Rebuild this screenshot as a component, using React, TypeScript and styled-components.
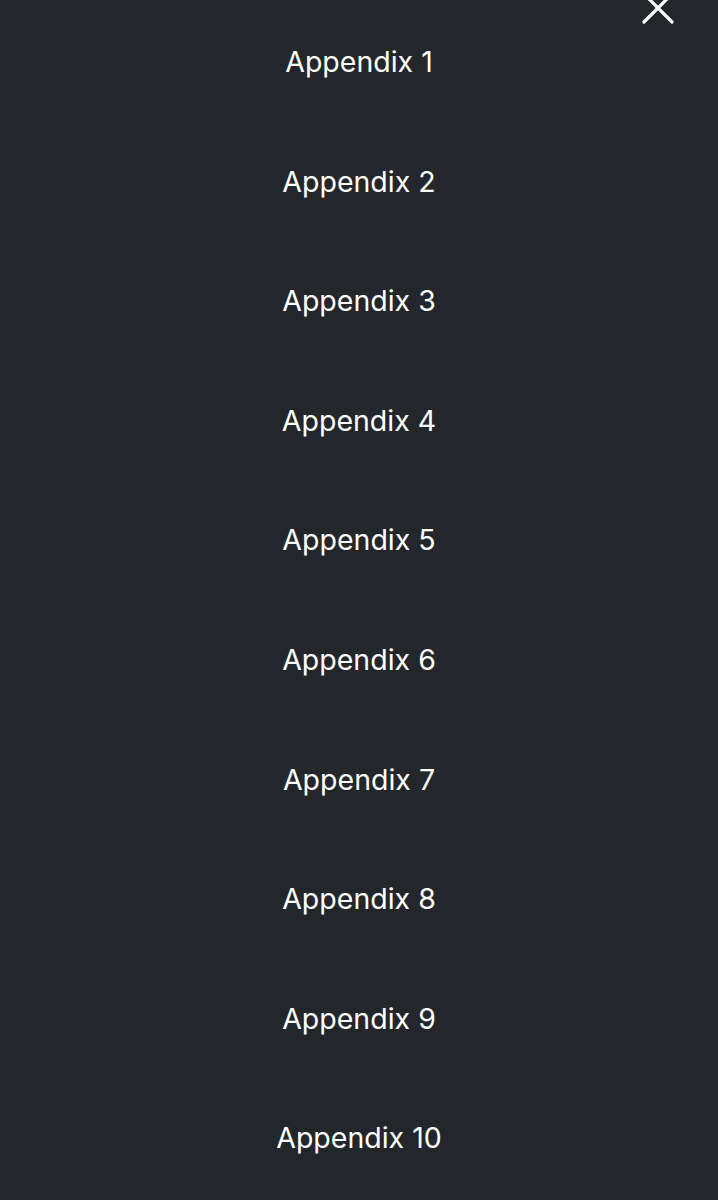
import { FC } from 'react';
import styled, { createGlobalStyle } from 'styled-components';

const GlobalStyle = createGlobalStyle`
  html, body {
    margin: 0;
    padding: 0;
    background: #23272b;
  }
`;

const items = Array.from({ length: 10 }, (_, i) => `Appendix ${i + 1}`);

const App: FC = () => (
  <>
    <GlobalStyle />
    <Menu>
      <CloseButton aria-label="Close">
        <svg width="36" height="36" viewBox="0 0 36 36">
          <path d="M4 4 L32 32 M32 4 L4 32" stroke="#fff" strokeWidth="3.2" strokeLinecap="round" />
        </svg>
      </CloseButton>
      <List>
        {items.map((label) => (
          <Item key={label}>{label}</Item>
        ))}
      </List>
    </Menu>
  </>
);

export default App;

const Menu = styled.nav`
  position: relative;
  width: 718px;
  height: 1200px;
  background: #23272b;
  overflow: hidden;
`;

const CloseButton = styled.button`
  position: absolute;
  top: -10px;
  left: 640px;
  padding: 0;
  background: none;
  border: none;
  cursor: pointer;
`;

const List = styled.ul`
  list-style: none;
  margin: 0;
  padding: 42px 0 0;
  display: flex;
  flex-direction: column;
  align-items: center;
`;

const Item = styled.li`
  height: 119.6px;
  font-family: Inter, 'Open Sans', sans-serif;
  font-size: 28.5px;
  line-height: 40px;
  color: #ffffff;
  letter-spacing: 0;
`;
